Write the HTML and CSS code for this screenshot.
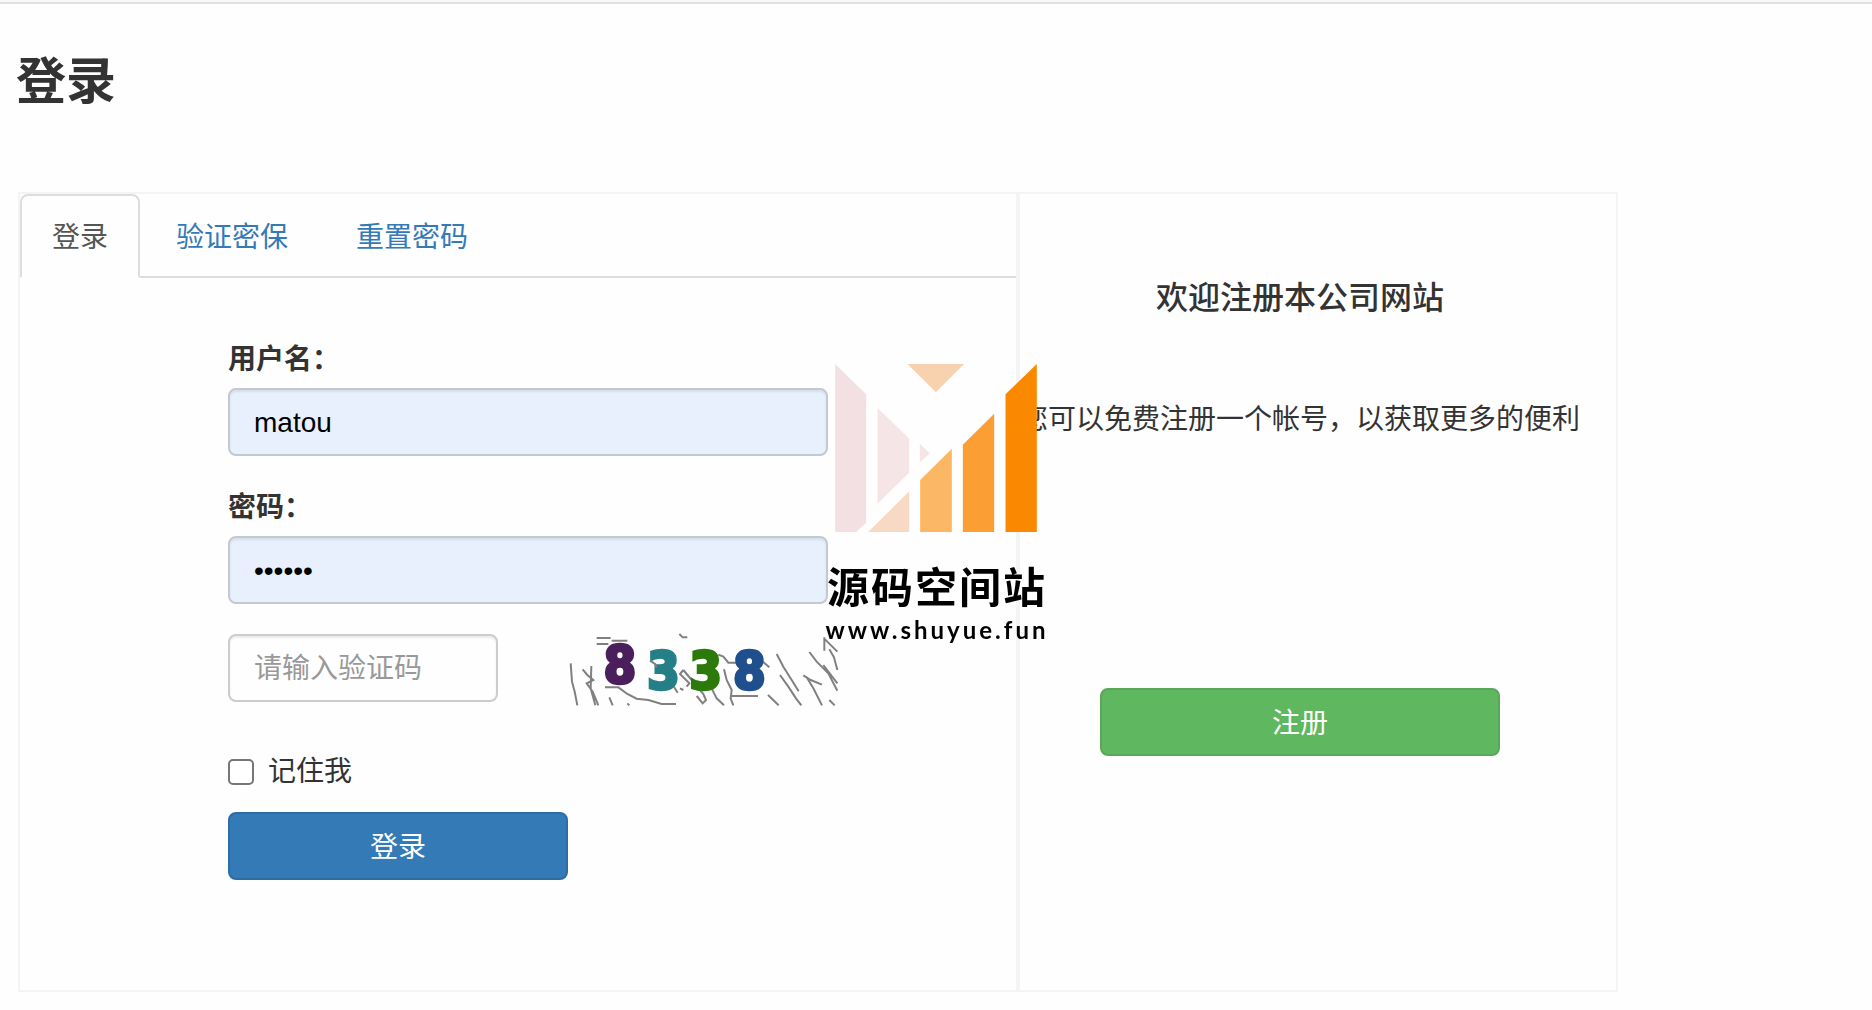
FILE: index.html
```
<!DOCTYPE html>
<html lang="zh-CN">
<head>
    <meta charset="UTF-8">
    <meta name="viewport" content="width=device-width, initial-scale=1.0">
    <title>登录</title>
    <link rel="stylesheet" href="styles.css">
</head>
<body>
    <div class="topbar"></div>
    <div class="page">
        <h1>登录</h1>
        <div class="container">
            <div class="login-box">
                <nav class="tabs">
                    <a class="active" href="#login">登录</a>
                    <a href="#verify">验证密保</a>
                    <a href="#reset">重置密码</a>
                </nav>
                <form class="login-form" id="login">
                    <div class="form-group">
                        <label for="username">用户名：</label>
                        <input class="form-control" type="text" id="username" name="username" value="matou">
                    </div>
                    <div class="form-group">
                        <label for="password">密码：</label>
                        <input class="form-control" type="password" id="password" name="password" value="matou1">
                    </div>
                    <div class="captcha-row">
                        <input class="form-control captcha-input" type="text" name="captcha" placeholder="请输入验证码" aria-label="请输入验证码">
                        <svg class="captcha" viewBox="54 42 840 216" role="img">
                            <g class="captcha-lines">
                                <path d="M92 130 L96 185 L104 215 L112 256 M128 148 L142 165 L160 180 L140 190 L158 215 L175 256 M154 138 L152 205 L166 256 M208 232 L218 256 M262 250 L268 256"/>
                                <path d="M170 54 H212 M170 72 H205 M215 62 H262 M418 42 L428 52 H442 M195 202 H235 L262 222 L290 236 L325 240 L365 252 H408"/>
                                <path d="M395 190 L413 218 M430 150 L420 162 L448 190 L440 200 M430 150 L455 180 L490 222 L498 240 L488 250 L470 228 M515 205 L530 235 L552 256 M430 210 L420 205"/>
                                <path d="M535 104 L550 110 L565 128 H590 M552 148 L560 180 L575 210 L572 236 L580 256 M575 228 H654 M660 118 L688 142 M684 225 L716 256"/>
                                <path d="M710 102 L730 140 L755 180 L776 214 M720 165 L745 200 L768 235 L784 256 M808 96 L830 125 L865 160 L892 212 M850 135 L892 190 M790 166 L812 180 L846 194 M800 172 L820 205 L846 256 M868 240 L884 256 M853 52 V92 M855 58 L892 95 M868 88 L882 112 L892 150"/>
                            </g>
                            <text class="digit" x="240" y="190" fill="#4b1f5c" stroke="#4b1f5c">8</text>
                            <text class="digit" x="370" y="208" fill="#257f86" stroke="#257f86">3</text>
                            <text class="digit" x="497" y="208" fill="#2c7a0c" stroke="#2c7a0c">3</text>
                            <text class="digit" x="628" y="208" fill="#1f4f8c" stroke="#1f4f8c">8</text>
                            <path class="captcha-lines" d="M330 122 L345 132 L350 142"/>
                        </svg>
                    </div>
                    <label class="remember"><input type="checkbox" name="remember">记住我</label>
                    <button class="btn btn-primary" type="submit">登录</button>
                </form>
            </div>
            <div class="register-box">
                <h2>欢迎注册本公司网站</h2>
                <p>您可以免费注册一个帐号，以获取更多的便利</p>
                <button class="btn btn-success" type="button">注册</button>
            </div>
        </div>
    </div>

    <div class="watermark">
        <svg class="watermark-logo" viewBox="76 72 605 504" aria-hidden="true">
            <path fill="#f3e0e2" d="M76 72 L169 163 V548 L139 576 H76 Z"/>
            <path fill="#f5e5e6" d="M203 203 L298 296 V398 L203 491 Z"/>
            <path fill="#f5e5e6" d="M330 311 L360 340 L330 368 Z"/>
            <path fill="#f8d2af" d="M293 72 H463 L378 157 Z"/>
            <path fill="#f8dac4" d="M298 454 V576 H175 Z"/>
            <path fill="#fcb765" d="M426 326 V576 H331 V420 Z"/>
            <path fill="#fb9f35" d="M553 221 V576 H459 V314 Z"/>
            <path fill="#fa8900" d="M681 72 V576 H587 V163 Z"/>
        </svg>
        <div class="watermark-name">源码空间站</div>
        <div class="watermark-url">www.shuyue.fun</div>
    </div>
</body>
</html>
```
FILE: styles.css
```
* {
    box-sizing: border-box;
}
body {
    margin: 0;
    background-color: #fefefe;
    color: #333;
    font-family: "Liberation Sans", "Noto Sans CJK SC", sans-serif;
    font-size: 28px;
    line-height: 40px;
}
.topbar {
    height: 4px;
    background-color: #f8f8f8;
    border-bottom: 2px solid #e0e0e0;
}
.page {
    padding: 50px 16px 16px;
}
h1 {
    margin: 0 0 82px;
    font-size: 50px;
    line-height: 56px;
    font-weight: bold;
}
.container {
    display: flex;
    max-width: 1600px;
    min-height: 800px;
    margin-left: 2px;
}
.login-box {
    width: 62.5%;
    border: 2px solid #f4f4f4;
}
.register-box {
    width: 37.5%;
    display: flex;
    flex-direction: column;
    align-items: center;
    padding: 84px 36px 0 0;
    border: 2px solid #f4f4f4;
}
.tabs {
    display: flex;
    gap: 4px;
    border-bottom: 2px solid #ddd;
}
.tabs a {
    margin-bottom: -2px;
    padding: 22px 30px 18px;
    border: 2px solid transparent;
    border-radius: 8px 8px 0 0;
    color: #337ab7;
    text-decoration: none;
}
.tabs a.active {
    border-color: #ddd;
    border-bottom-color: #fefefe;
    background-color: #fefefe;
    color: #555;
}
.login-form {
    max-width: 808px;
    padding: 60px 0 0 208px;
}
.form-group {
    margin-bottom: 30px;
}
.form-group label {
    display: block;
    padding-top: 2px;
    margin-bottom: 8px;
    font-weight: bold;
}
.form-control {
    display: block;
    width: 100%;
    height: 68px;
    padding: 14px 24px 12px;
    border: 2px solid #ccc;
    border-radius: 8px;
    box-shadow: inset 0 2px 2px rgba(0, 0, 0, 0.075);
    background-color: #fefefe;
    color: #000;
    font-family: inherit;
    font-size: 28px;
}
.form-group .form-control {
    border-color: #c4c8cf;
    background-color: #e8f0fe;
}
.form-control::placeholder {
    color: #999;
}
.captcha-row {
    display: flex;
    align-items: flex-start;
    gap: 60px;
    margin-bottom: 46px;
}
.captcha-row .captcha-input {
    width: 270px;
}
.captcha {
    flex: none;
    width: 280px;
    height: 72px;
    margin-right: -10px;
    overflow: visible;
}
.captcha-lines {
    fill: none;
    stroke: #808080;
    stroke-width: 6;
}
.digit {
    font-family: "DejaVu Sans Condensed", "DejaVu Sans", sans-serif;
    font-size: 155px;
    font-weight: bold;
    stroke-width: 10;
    text-anchor: middle;
}
.remember {
    display: flex;
    align-items: center;
    gap: 14px;
    margin-bottom: 20px;
}
.remember input {
    appearance: none;
    width: 26px;
    height: 26px;
    margin: 0;
    border: 2px solid #767676;
    border-radius: 5px;
    background-color: #fff;
}
.remember input:checked {
    background-color: #337ab7;
}
.btn {
    display: block;
    height: 68px;
    padding: 14px 24px 10px;
    border: 2px solid transparent;
    border-radius: 8px;
    color: #fff;
    font-family: inherit;
    font-size: 28px;
    line-height: 40px;
    cursor: pointer;
}
.btn-primary {
    width: 340px;
    border-color: #2e6da4;
    background-color: #337ab7;
}
.btn-success {
    width: 400px;
    border-color: #5aa75a;
    background-color: #5fb760;
}
.register-box h2 {
    margin: 0 0 82px;
    font-size: 32px;
    line-height: 40px;
    font-weight: 500;
}
.register-box p {
    margin: 0 0 248px;
    white-space: nowrap;
}
.watermark {
    position: fixed;
    inset: 0;
    display: flex;
    flex-direction: column;
    align-items: center;
    justify-content: center;
    pointer-events: none;
    color: #000;
    font-weight: bold;
}
.watermark-logo {
    width: 202px;
    height: 168px;
    margin-bottom: 32px;
}
.watermark-name {
    padding-left: 2px;
    font-size: 42px;
    line-height: 50px;
    letter-spacing: 2px;
}
.watermark-url {
    padding-left: 2px;
    font-family: Lato, sans-serif;
    font-size: 24px;
    line-height: 32px;
    letter-spacing: 3px;
}
```
